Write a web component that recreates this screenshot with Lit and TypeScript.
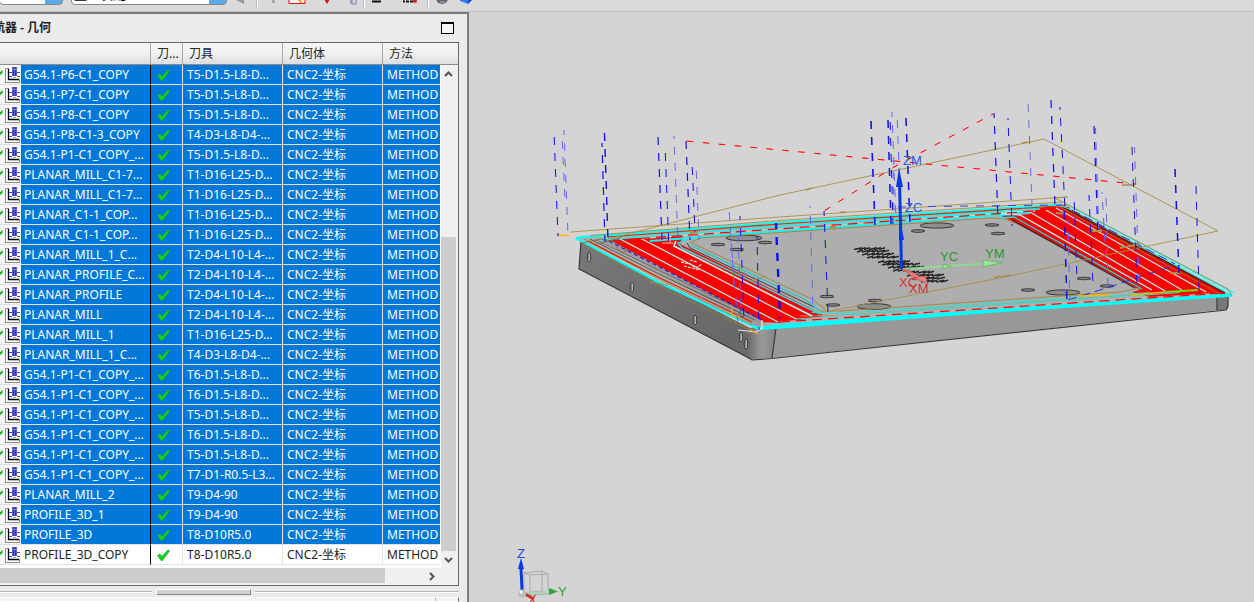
import { LitElement, html, css, svg } from "lit";
import { customElement, property } from "lit/decorators.js";
import { classMap } from "lit/directives/class-map.js";

interface Operation {
  name: string;
  tool: string;
  selected: boolean;
}

const T1 = "T1-D16-L25-D...";
const T2 = "T2-D4-L10-L4-...";
const T4 = "T4-D3-L8-D4-...";
const T5 = "T5-D1.5-L8-D...";
const T6 = "T6-D1.5-L8-D...";
const COPY = "G54.1-P1-C1_COPY_...";

const OPERATIONS: Operation[] = [
  ["G54.1-P6-C1_COPY", T5],
  ["G54.1-P7-C1_COPY", T5],
  ["G54.1-P8-C1_COPY", T5],
  ["G54.1-P8-C1-3_COPY", T4],
  [COPY, T5],
  ["PLANAR_MILL_C1-7...", T1],
  ["PLANAR_MILL_C1-7...", T1],
  ["PLANAR_C1-1_COP...", T1],
  ["PLANAR_C1-1_COP...", T1],
  ["PLANAR_MILL_1_C...", T2],
  ["PLANAR_PROFILE_C...", T2],
  ["PLANAR_PROFILE", T2],
  ["PLANAR_MILL", T2],
  ["PLANAR_MILL_1", T1],
  ["PLANAR_MILL_1_C...", T4],
  [COPY, T6],
  [COPY, T6],
  [COPY, T5],
  [COPY, T6],
  [COPY, T5],
  [COPY, "T7-D1-R0.5-L3..."],
  ["PLANAR_MILL_2", "T9-D4-90"],
  ["PROFILE_3D_1", "T9-D4-90"],
  ["PROFILE_3D", "T8-D10R5.0"],
  ["PROFILE_3D_COPY", "T8-D10R5.0"],
].map(([name, tool]) => ({ name, tool, selected: name !== "PROFILE_3D_COPY" }));

const check = html`<svg width="14" height="14" viewBox="0 0 14 14" role="img" aria-label="OK">
  <path d="M.5 7.500 3 6 5 8.400 11 1.800 12.500 3 5.400 12.400 4 12.400Z" fill="#14d422" stroke="#12a81c" stroke-width=".7" />
</svg>`;

const opIcon = html`<svg width="21" height="19" viewBox="0 0 21 19" aria-hidden="true">
  <rect width="21" height="19" fill="#f6f6f6" />
  <path d="M-5 9 -1 8 3 5 2.500 8 -2 12Z" fill="#12b81e" />
  <path d="M6 4H20V17H6Z" fill="#fff" />
  <path d="M9 3.500H5.500V17.500H19.500V14" fill="none" stroke="#8a8a8a" />
  <path d="M8.500 4V14.500H19" fill="none" stroke="#000" stroke-width="1.300" />
  <path d="M9 7.500H12M17 7.500H20M9 11.500H12M17 11.500H20" stroke="#4444e0" />
  <rect x="12" y="2" width="5" height="9" fill="#5c5ccc" />
  <path d="M13.500 2V11M15.500 2V11" stroke="#34349c" stroke-width=".8" />
  <path d="M12 4.500h5M13 12.500h3" stroke="#8484e0" stroke-width=".8" />
</svg>`;

@customElement("operation-navigator")
export class OperationNavigator extends LitElement {
  @property({ attribute: false }) operations: Operation[] = [];

  static styles = css`
    :host {
      display: flex;
      flex-direction: column;
      box-sizing: border-box;
      background: #ebebeb;
      border-top: 2px solid #7a7a7a;
      border-right: 2px solid #7d7d7d;
      overflow: hidden;
      font: 12px/16px "Noto Sans", "Noto Sans CJK SC", sans-serif;
      color: #222;
    }
    .caption {
      display: flex;
      flex: none;
      box-sizing: border-box;
      height: 28px;
      align-items: center;
      justify-content: space-between;
      padding-right: 13px;
    }
    .title {
      display: flex;
      justify-content: flex-end;
      width: 51px;
      overflow: hidden;
      white-space: nowrap;
      margin: 0;
      padding-bottom: 2px;
      font: bold 12px/18px "Noto Sans CJK SC", sans-serif;
      color: #1e1e28;
    }
    .restore {
      width: 13px;
      height: 12px;
      padding: 0;
      border: 1px solid #000;
      border-top-width: 2px;
      background: #f4f4f4;
    }
    .box {
      flex: none;
      margin-right: 8px;
      border: 1px solid #696969;
      border-left: 0;
      background: #fff;
    }
    .grid {
      position: relative;
      overflow: hidden;
    }
    table {
      width: 100%;
      table-layout: fixed;
      border-collapse: separate;
      border-spacing: 0;
    }
    .c-name { width: 151px; }
    .c-path { width: 32px; }
    .c-mid { width: 100px; }
    th {
      box-sizing: border-box;
      height: 22px;
      padding: 0 0 0 6px;
      border-bottom: 1px solid #8c8c8c;
      border-right: 1px solid #a8a8a8;
      background: linear-gradient(#f4f4f4 40%, #dcdee0);
      text-align: left;
      font-weight: 400;
      font-size: 12px;
      line-height: 16px;
      white-space: nowrap;
    }
    th:last-child { border-right: 0; }
    td {
      box-sizing: border-box;
      height: 20px;
      padding: 0 0 0 4px;
      border-right: 1px solid #e2e2e2;
      border-bottom: 1px solid #e2e2e2;
      white-space: nowrap;
      line-height: 19px;
    }
    td:last-child { border-right: 0; }
    td.name { padding: 0; border-right-color: #000; }
    td.path { padding-left: 6px; }
    .cell { display: flex; height: 19px; }
    .cell svg { flex: none; }
    .label {
      flex: 1;
      min-width: 0;
      padding-left: 3px;
    }
    .path svg { display: block; }
    .selected td:not(.name), .selected .label {
      background: #0078d7;
      color: #fff;
    }
    .foot { height: 3px; }
    .vbar {
      position: absolute;
      top: 22px;
      right: 0;
      bottom: 0;
      width: 17px;
      display: flex;
      flex-direction: column;
      justify-content: space-between;
      background: #f0f0f0;
      border-left: 1px solid #fff;
    }
    .step {
      width: 15px;
      height: 17px;
      padding: 0;
      border: 0;
      background: #f0f0f0;
    }
    .step svg { display: block; margin: auto; }
    .track { flex: 1; display: flex; flex-direction: column; justify-content: flex-end; }
    .thumb { height: 67%; background: #cdcdcd; margin-right: 2px; }
    .hbar { display: flex; height: 17px; background: #f0f0f0; }
    .hthumb { width: 84%; height: 15px; background: #cdcdcd; }
    .hbar .step { margin-left: auto; margin-right: 19px; }
    .splitter {
      display: flex;
      flex: none;
      align-items: center;
      gap: 4px;
      height: 11px;
      margin-right: 8px;
    }
    .rule { height: 1px; background: #b4b4b4; border-bottom: 1px solid #fff; }
    .rule.left { width: 152px; }
    .rule.right { flex: 1; }
    .grip {
      box-sizing: border-box;
      width: 95px;
      height: 6px;
      background: #d0d0d0;
      border: 1px solid #fff;
      border-right-color: #888;
      border-bottom-color: #888;
    }
    .next {
      flex: 1;
      display: flex;
      justify-content: flex-end;
      margin-right: 8px;
      background: #f4f4f4;
      border: 1px solid #fff;
      border-right: 1px solid #696969;
    }
    .next i { width: 22px; border-left: 1px solid #aaa; }
  `;

  render() {
    return html`
      <div class="caption">
        <h1 class="title">工序导航器 - 几何</h1>
        <button class="restore" aria-label="最大化"></button>
      </div>
      <div class="box">
        <div class="grid">
          <table>
            <colgroup>
              <col class="c-name" /><col class="c-path" /><col class="c-mid" /><col class="c-mid" /><col />
            </colgroup>
            <thead>
              <tr><th aria-label="名称"></th><th>刀...</th><th>刀具</th><th>几何体</th><th>方法</th></tr>
            </thead>
            <tbody>
              ${this.operations.map(
                (op) => html`<tr class=${classMap({ selected: op.selected })}>
                  <td class="name"><div class="cell">${opIcon}<span class="label">${op.name}</span></div></td>
                  <td class="path">${check}</td>
                  <td>${op.tool}</td>
                  <td>CNC2-坐标</td>
                  <td>METHOD</td>
                </tr>`,
              )}
            </tbody>
          </table>
          <div class="foot"></div>
          <div class="vbar">
            <button class="step" aria-label="向上">
              <svg width="9" height="6" viewBox="0 0 9 6"><path d="M1 5 4.500 1.500 8 5" fill="none" stroke="#555" stroke-width="2" /></svg>
            </button>
            <div class="track"><div class="thumb"></div></div>
            <button class="step" aria-label="向下">
              <svg width="9" height="6" viewBox="0 0 9 6"><path d="M1 1 4.500 4.500 8 1" fill="none" stroke="#555" stroke-width="2" /></svg>
            </button>
          </div>
        </div>
        <div class="hbar">
          <div class="hthumb"></div>
          <button class="step" aria-label="向右">
            <svg width="6" height="9" viewBox="0 0 6 9"><path d="M1 1 4.500 4.500 1 8" fill="none" stroke="#555" stroke-width="2" /></svg>
          </button>
        </div>
      </div>
      <div class="splitter">
        <div class="rule left"></div>
        <div class="grip"></div>
        <div class="rule right"></div>
      </div>
      <div class="next"><i></i></div>
    `;
  }
}

/* Rapid plunge moves: top x, top y, bottom x, bottom y, weight, dash phase. */
const PLUNGES: number[][] = [
  [554, 133, 558, 236, 1, 12], [564, 130, 568, 236, 1, 3], [562, 134, 565, 200, 1, 9],
  [602, 143, 605, 242, 1.2, 4], [604.5, 133, 608, 240, 1.4, 0],
  [658, 137, 662, 240, 1.2, 0], [665, 145, 669, 250, 1, 8], [674, 136, 678, 246, 1, 5],
  [686, 141, 690, 240, 1.2, 0], [692, 160, 695, 232, 1, 9], [696, 163, 699, 240, 1, 8],
  [729, 208, 734, 285, 1, 12], [740, 216, 744, 320, 1, 4], [731, 240, 738, 325, 1, 6], [738, 235, 741, 310, 1, 0],
  [757, 236, 759, 330, 1, 5], [776, 223, 780, 318, 2.4, 2],
  [810, 206, 813, 310, 1, 6], [824, 211, 828, 313, 1, 3],
  [871, 121, 875, 226, 1.6, 0], [888, 120, 891, 224, 1.5, 0], [890, 115, 893, 224, 1, 9],
  [892, 112, 896, 220, 1, 3], [897, 112, 901, 220, 1, 8], [906, 118, 910, 224, 1.5, 0], [893, 160, 894, 216, 1, 5],
  [994, 113, 998, 220, 1.2, 3], [1008, 118, 1012, 226, 1, 6],
  [1028, 100, 1032, 205, 1, 12], [1051, 100, 1055, 207, 1.2, 0], [1060, 107, 1065, 210, 1, 5],
  [1094, 126, 1098, 236, 1.2, 0], [1095.5, 128, 1099, 236, 1, 2], [1074, 196, 1077, 280, 1, 10],
  [1064, 204, 1067, 305, 1.5, 9], [1068, 220, 1070, 300, 1, 4], [1089, 195, 1093, 285, 1, 2],
  [1102, 192, 1106, 260, 1, 6], [1106, 192, 1108, 290, 1, 10],
  [1132, 147, 1137, 285, 1, 0], [1134.5, 147, 1139, 285, 1, 2],
  [1175, 169, 1179, 275, 1.5, 0], [1196, 186, 1199, 290, 1, 0],
];

const HOLES: number[][] = [
  [937, 225.5, 17, 2.6], [918, 231, 7, 1.3], [992, 225, 7, 1.2], [998, 233.5, 7, 1.2],
  [744, 238, 18, 2.8], [718, 244.5, 7, 1.2], [765, 242.5, 7, 1.2], [737, 249.5, 7, 1.2],
  [1063, 292.5, 17, 2.6], [1028, 290, 7, 1.2], [1084, 278.5, 7, 1.2], [1107, 286, 7, 1.2],
  [874, 306.5, 17, 2.8], [875, 300.5, 7, 1.2], [827, 296.5, 7, 1.2], [833, 305, 7, 1.2],
];

const SIDE_HOLES = [[589, 257], [632, 287], [695, 320], [741, 337], [746, 344]];

/* Engraved lettering bands: left x, right x, baseline y. */
const ENGRAVED: number[][] = [
  [854, 884, 249.5], [857, 886, 252], [862, 892, 255], [867, 896, 258],
  [878, 906, 262.5], [882, 914, 265], [888, 919, 268], [893, 905, 271],
  [908, 932, 273], [907, 938, 276], [912, 942, 279], [921, 945, 282],
];

/* Straight tool paths: colour, width, points. */
const PATHS: [string, number, string][] = [
  // rear edge
  ["#00ffff", 2, "576,237.500 780,222.500 1062,204.500"],
  ["#d03000", 1.2, "608,237 780,224 1066,205.500"],
  ["#a08030", 0.8, "590,235.500 780,220.500 1062,202"],
  ["#00ffff", 1.4, "600,240 780,226.500 1040,209"],
  ["#e8c0c0", 1.3, "640,238.500 780,228.800 1035,211"],
  ["#00ffff", 2, "650,241 780,231 1000,215 1030,213"],
  ["#a08848", 1, "690,243 700,238 780,232.500 990,218 1005,219 1020,225"],
  // front edge
  ["#a08848", 1, "820,311 840,311 1120,292 1140,288"],
  ["#30e0d8", 1.2, "812,312.500 840,313.500 1150,292.500"],
  ["#d88850", 1, "800,316 840,315.500 1150,294"],
  ["#30e0e0", 1.2, "795,319 1180,292.500"],
  ["#f0a0a0", 1.6, "780,322 1210,294"],
  ["#00ffff", 1.2, "770,324.500 1215,295"],
  ["#00ffff", 3.6, "757,328.500 1000,310.500 1232,295"],
  // left edge
  ["#00ffff", 2.2, "576,238 660,283 757,328"],
  ["#a08030", 0.8, "580,242 660,286.500 752,331"],
  ["#a08030", 0.8, "584,239 660,280 752,325"],
  ["#e02000", 1.3, "588,241 660,278 752,322"],
  ["#404040", 0.8, "590,239 662,275.500 755,320"],
  ["#606060", 0.8, "596,240 668,274.500 756,317"],
  // left pocket
  ["#b4f4f4", 1.2, "620,239 778,322"],
  ["#b4f4f4", 1.2, "642,239 796,319"],
  ["#b4f4f4", 1.6, "676,241 674,246 812,316"],
  ["#20e8e8", 1.5, "686,240 678,243 682,248 820,314"],
  ["#303030", 0.9, "687,243 690,248 814,307"],
  ["#20c8c8", 1.3, "690,245 806,300 820,311"],
  ["#a08848", 1, "692,243 812,299 825,309"],
  // right pocket
  ["#303030", 1.3, "1012,220 1135,288"],
  ["#00e8e8", 1.3, "1000,218 1014,217 1142,289"],
  ["#b4f4f4", 1.3, "1000,213.500 1020,215 1152,290"],
  ["#b4f4f4", 1.2, "1005,211 1030,212 1165,291"],
  ["#b4f4f4", 1.1, "1046,210 1182,290"],
  ["#b4f4f4", 1.1, "1056,208 1206,292"],
  ["#5c2410", 1.8, "1064,208 1225,293"],
  ["#a08030", 0.8, "1060,207 1222,295"],
  ["#c8d8d8", 2.6, "1070,207.500 1228,292"],
  ["#00ffff", 1.2, "1066,204 1234,293"],
  ["#00ffff", 1, "1062,206 1076,212 1228,293"],
  ["#a08848", 0.9, "1055,198 1228,289 1232,296"],
];

@customElement("cam-viewport")
export class CamViewport extends LitElement {
  static styles = css`
    :host { display: block; background: #d4d4d4; overflow: hidden; }
    .scene { display: block; width: 100%; height: 100%; }
    .axis { font: 13px "Liberation Sans", sans-serif; }
  `;

  private engraving() {
    return ENGRAVED.map(([x1, x2, y], row) => {
      const strokes = [];
      for (let x = x1; x < x2; x += 5) {
        const run = 6 + ((x + row) % 3);
        strokes.push(svg`<path d="M${x} ${y}l${run} -1.800" />`);
      }
      return strokes;
    });
  }

  render() {
    return html`<svg class="scene" viewBox="469 12 785 590" preserveAspectRatio="xMinYMin meet" role="img" aria-label="刀轨">
      <defs>
        <linearGradient id="side" x1="0" y1="0" x2="1" y2="0.500">
          <stop offset="0" stop-color="#787878" /><stop offset="1" stop-color="#696969" />
        </linearGradient>
        <linearGradient id="corner" x1="0" x2="1">
          <stop offset="0" stop-color="#686868" /><stop offset="0.500" stop-color="#999" /><stop offset="1" stop-color="#858585" />
        </linearGradient>
      </defs>

      <path d="M581 241 750 328V359L579 269Z" fill="url(#side)" />
      <path d="M748 328 776 326 772 358 752 359.500 747 358Z" fill="url(#corner)" />
      <path d="M776 326 1228 295V309L772 358Z" fill="#989898" />
      <path d="M1218 296H1228V309L1217 311Z" fill="#787878" />
      <path d="M581 241 579 269 747 357 752 360 772 358.500 1226 310 1228 306V296M776 328 772 358M1217 297V310" fill="none" stroke="#383838" stroke-width="1.200" />
      <path d="M578 238 1064 204 1230 295 757 329Z" fill="#aeaeae" />
      <path d="M600 240 640 240 770 322 757 327Z" fill="#9c9c9c" />

      ${SIDE_HOLES.map(([x, y]) => svg`<ellipse cx=${x} cy=${y} rx="1.800" ry="5" fill="#b4b4b4" stroke="#222" stroke-width=".8" /><path d="M${x - 1} ${y - 4}v7" stroke="#555" />`)}

      <path d="M608 239 684 235 680 244 690 249 812 309 824 316 780 323 764 322Z" fill="#f00" />
      <path d="M1000 215 1045 207 1068 207 1226 294 1150 297 1132 292 1140 290 1012 221Z" fill="#f00" />

      ${HOLES.map(([x, y, rx, ry]) => svg`<ellipse cx=${x} cy=${y} rx=${rx} ry=${ry} fill="#8e8e8e" stroke="#383838" />`)}
      <g stroke="#262626" stroke-width="1.500" fill="none">${this.engraving()}</g>

      ${PATHS.map(([color, width, points]) => svg`<polyline points=${points} fill="none" stroke=${color} stroke-width=${width} />`)}
      <path d="M640 238.500 780 228.800 1035 211M780 322 1210 294" fill="none" stroke="#f00" stroke-width="1.200" stroke-dasharray="10 6" />
      <path d="M609 241 762 320" stroke="#2020d0" stroke-width="1.200" stroke-dasharray="4 3" />
      <path d="M1072 210 1175 264M1068 300 1100 290 1170 267" fill="none" stroke="#2030e0" stroke-dasharray="9 5" />
      <path d="M1078 296 1110 295M1130 295 1166 292" stroke="#ffb400" stroke-width="1.600" />
      <path d="M1166 292 1198 290" stroke="#70e000" stroke-width="1.800" />
      <path d="M681 262 690 264 696 268 702 264M684 266 700 270M690 260 697 262" fill="none" stroke="#c8f0f0" stroke-width="1.100" stroke-dasharray="3 1" />
      <path d="M662 243H674M670 236V243" fill="none" stroke="#ffb0b0" />
      <path d="M583 243 600 239 626 243M594 245 612 240 622 237M616 247 622 253 628 249" stroke="#806820" fill="none" stroke-width=".8" />
      <path d="M738 330 756 332 762 328 762 320" fill="none" stroke="#f6dede" stroke-width="1.200" />
      <path d="M732 308V316H740M750 330 758 334" fill="none" stroke="#ffb400" />
      <path d="M745 309A5 4 0 1 0 744 317" fill="none" stroke="#2a45e8" />
      <path d="M557 235.500H570" stroke="#ffb400" stroke-width="1.400" /><path d="M568 236H580" stroke="#f8c8b8" stroke-width="1.400" />

      <g fill="none" stroke="#a89048">
        <path d="M570 232 780 217 1067 197M608 239 780 195 1044 139 1218 231 1000 278 830 311M650 282 668 285M752 281 766 276M1055 198 1068 197" stroke-width=".9" />
        <path d="M806 190 812 188M840 212.500 846 212M1022 143 1028 142M1122 185H1135M994 278 1000 276M1000 277 1010 275" stroke-width="1.600" />
        <path d="M690 233 698 232M830 227 836 227M1056 213 1066 214M1092 231H1102M1120 248 1140 244M1170 273H1180" stroke-width="2.200" />
      </g>

      <g fill="none">
        <path d="M686 141 895 161 1136 184M824 211 894 167 993 114" stroke="#ff9090" stroke-dasharray="8 8" />
        <path d="M686 141 895 161 1136 184M824 211 894 167 993 114" stroke="#f00" stroke-dasharray="6 10" stroke-dashoffset="-1" />
      </g>
      <path d="M898 207H915M928 206.500 1062 205" fill="none" stroke="#3a48d8" stroke-dasharray="8 8" />

      ${PLUNGES.map(
        ([x1, y1, x2, y2, w, phase], i) => svg`<g stroke-width=${w} stroke-dasharray="8 8" stroke-dashoffset=${phase}>
          <line x1=${x1} y1=${y1} x2=${x2} y2=${y2} stroke=${i % 3 === 0 || w > 1.1 ? "#1010e8" : "#6868ee"} />
        </g>`,
      )}

      <path d="M903 269 980 264" stroke="#90d890" stroke-width="2" />
      <path d="M983 260 1003 262.500 983 267Z" fill="#a0e0a0" stroke="#68b868" />
      <path d="M943 264 951 266.500 943 269Z" fill="#a0e0a0" stroke="#68b868" />
      <path d="M903 269 920 278" stroke="#e08080" stroke-width="3" />
      <path d="M904 270 917 274 914 278ZM914 278 925 276 928 284Z" fill="#e88080" stroke="#c85050" stroke-width=".7" />
      <path d="M899.500 180 901.500 269" stroke="#0838e0" stroke-width="3" />
      <path d="M899 168 903 187H896Z" fill="#0838e0" /><path d="M899 214 904 240H899Z" fill="#0838e0" />
      <text class="axis" x="903" y="165" fill="#2a55e8">ZM</text>
      <text class="axis" x="905" y="212" fill="#2a55e8">ZC</text>
      <text class="axis" x="940" y="261" fill="#2e962e">YC</text>
      <text class="axis" x="985" y="258" fill="#2e962e">YM</text>
      <text class="axis" x="899" y="287" fill="#d83030">XC</text>
      <text class="axis" x="909" y="293" fill="#d83030">XM</text>

      <path d="M524 573 542 571 548 574V594L530 595H524ZM524 573 530 575 548 574M530 575V595M542 571V591L524 593M542 591 548 594" fill="none" stroke="#aaa" />
      <path d="M524 593.500 550 592" stroke="#a8d8b0" stroke-width="2" />
      <path d="M549 588 558 591.500 549 595Z" fill="#30a040" />
      <path d="M522 590 521 568" stroke="#0838e0" stroke-width="3" />
      <path d="M521 558 524 569H518Z" fill="#0838e0" />
      <path d="M523 593 534 599" stroke="#d03030" stroke-width="3" />
      <circle cx="522" cy="593.500" r="4" fill="#bcbcbc" /><circle cx="521" cy="592" r="1.500" fill="#fff" />
      <text class="axis" x="517" y="558" fill="#2a45e8">Z</text>
      <text class="axis" x="558" y="596" fill="#2ea040">Y</text>
      <text class="axis" x="528" y="604" fill="#d03030">X</text>
    </svg>`;
  }
}

@customElement("app-root")
export class AppRoot extends LitElement {
  static styles = css`
    :host {
      display: flex;
      flex-direction: column;
      height: 100vh;
      overflow: hidden;
      background: #d4d4d4;
    }
    .toolbar {
      box-sizing: border-box;
      display: flex;
      flex: none;
      align-items: flex-end;
      height: 12px;
      padding-bottom: 6px;
      overflow: hidden;
      background: #dadada;
      border-bottom: 1px solid #bebebe;
    }
    .combo {
      display: flex;
      flex: none;
      height: 22px;
      box-sizing: border-box;
      border: 1px solid #888;
      border-radius: 4px;
      overflow: hidden;
      background: linear-gradient(90deg, #fff calc(100% - 17px), #58ace8 calc(100% - 17px));
    }
    .combo.filter { width: 64px; margin-left: -1px; }
    .combo.scope { width: 156px; margin-left: 8px; }
    select {
      appearance: none;
      width: 100%;
      border: 0;
      padding: 0 2px;
      background: transparent;
      font: 13px/20px "Noto Sans CJK SC", sans-serif;
      color: #000;
    }
    .tool {
      flex: none;
      width: 18px;
      height: 20px;
      padding: 0;
      border: 0;
      margin-bottom: -2px;
      background: none;
    }
    .tool svg { display: block; }
    .group { display: flex; flex: none; align-items: flex-end; justify-content: space-around; }
    .group.a { width: 29px; }
    .group.b { width: 105px; }
    .group.c { width: 62px; }
    .group.d { width: 52px; }
    .sep { flex: none; width: 1px; height: 20px; margin-bottom: -4px; background: #bbb; border-right: 1px solid #fff; }
    .workspace { display: flex; flex: 1; min-height: 0; }
    operation-navigator { flex: none; width: 469px; }
    cam-viewport { flex: 1; min-width: 0; }
  `;

  private tool(label: string, drawing: unknown) {
    return html`<button class="tool" aria-label=${label}><svg width="18" height="20" viewBox="0 0 18 20">${drawing}</svg></button>`;
  }

  render() {
    return html`
      <div class="toolbar">
        <div class="combo filter"><select aria-label="选择过滤器"><option></option></select></div>
        <div class="combo scope"><select aria-label="选择范围"><option>整个装配</option></select></div>
        <div class="group a">${this.tool("后退", svg`<path d="M1 12 11 6V17Z" fill="#999" />`)}</div>
        <div class="sep"></div>
        <div class="group b">
          ${this.tool("捕捉", svg`<path d="M10 4h3v12h-3z" fill="#b0a89c" />`)}
          ${this.tool("矩形选择", svg`<path d="M1 2H17V16.500H1Z" fill="#f4f4f4" stroke="#d8101c" /><path d="M9 11 14 16" stroke="#f0a030" stroke-width="2" />`)}
          ${this.tool("点", svg`<path d="M12 5 15 12 12 17 9 12Z" fill="#e01010" />`)}
          ${this.tool("注释", svg`<path d="M5 6H10V17M11 12H15V17H11Z" fill="none" stroke="#8070b0" /><path d="M12 10h3v3h-3z" fill="#e8a040" />`)}
        </div>
        <div class="sep"></div>
        <div class="group c">
          ${this.tool("直线", svg`<path d="M0 14.500H9" stroke="#111" stroke-width="2" />`)}
          ${this.tool("曲线", svg`<path d="M-1 14.500H10" stroke="#111" stroke-width="2" stroke-dasharray="3 1" /><circle cx="12" cy="14" r="2" fill="#e02020" />`)}
        </div>
        <div class="sep"></div>
        <div class="group d">
          ${this.tool("视图", svg`<circle cx="9" cy="11" r="6" fill="#65656d" /><path d="M7 15h5" stroke="#a4b4e4" />`)}
          ${this.tool("着色", svg`<path d="M1 8 13 8V13L9 17 1 14Z" fill="#3478f0" /><path d="M9 17 13 13V8L9 10Z" fill="#1848c8" />`)}
        </div>
      </div>
      <div class="workspace">
        <operation-navigator .operations=${OPERATIONS}></operation-navigator>
        <cam-viewport></cam-viewport>
      </div>
    `;
  }
}
